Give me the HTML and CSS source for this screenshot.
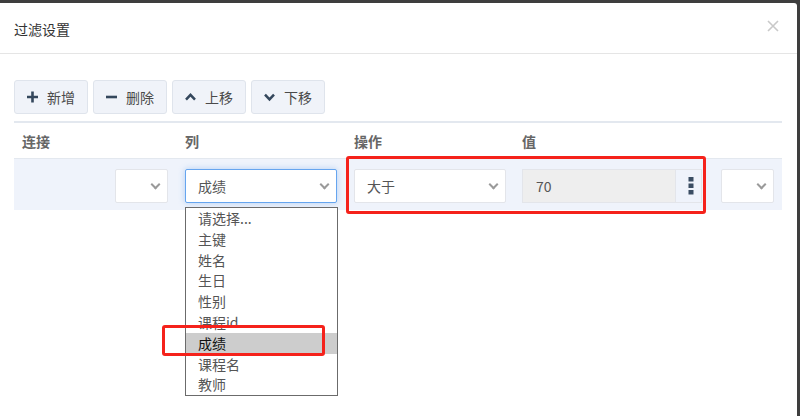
FILE: index.html
```html
<!DOCTYPE html>
<html>
<head>
<meta charset="utf-8">
<link rel="stylesheet" href="styles.css">
</head>
<body>
<div class="backdrop">
  <div class="modal">
    <div class="modal-header">
      <span class="title">过滤设置</span>
      <svg class="close" width="12" height="12" viewBox="0 0 12 12"><path d="M1 1L11 11M11 1L1 11" stroke="#c9c9c9" stroke-width="1.6"/></svg>
    </div>
    <div class="modal-body">
      <div class="toolbar">
        <button class="btn"><svg width="11" height="12" viewBox="0 0 11 12"><path d="M5.5 0.5V11.5M0 6H11" stroke="#34475c" stroke-width="2.6"/></svg><span>新增</span></button>
        <button class="btn"><svg width="11" height="12" viewBox="0 0 11 12"><path d="M0 6H11" stroke="#34475c" stroke-width="2.6"/></svg><span>删除</span></button>
        <button class="btn"><svg width="11" height="12" viewBox="0 0 11 12"><path d="M1 8.6L5.5 3.8L10 8.6" fill="none" stroke="#34475c" stroke-width="2.5"/></svg><span>上移</span></button>
        <button class="btn"><svg width="11" height="12" viewBox="0 0 11 12"><path d="M1 3.6L5.5 8.4L10 3.6" fill="none" stroke="#34475c" stroke-width="2.5"/></svg><span>下移</span></button>
      </div>
      <div class="grid">
        <div class="th">连接</div>
        <div class="th">列</div>
        <div class="th">操作</div>
        <div class="th">值</div>
        <div class="th"></div>
        <div class="td td-right"><div class="select small"><span></span><i class="chev"></i></div></div>
        <div class="td dd-host">
          <div class="select focus"><span>成绩</span><i class="chev"></i></div>
          <ul class="dropdown">
            <li>请选择...</li>
            <li>主键</li>
            <li>姓名</li>
            <li>生日</li>
            <li>性别</li>
            <li>课程id</li>
            <li class="sel">成绩</li>
            <li>课程名</li>
            <li>教师</li>
          </ul>
        </div>
        <div class="td"><div class="select"><span>大于</span><i class="chev"></i></div></div>
        <div class="td">
          <div class="input-group">
            <div class="input">70</div>
            <div class="addon"><svg width="6" height="18" viewBox="0 0 6 18"><rect x="0.5" y="0" width="5" height="4.5" fill="#3a4d63"/><rect x="0.5" y="6.5" width="5" height="4.5" fill="#3a4d63"/><rect x="0.5" y="13" width="5" height="4.5" fill="#3a4d63"/></svg></div>
          </div>
        </div>
        <div class="td"><div class="select small"><span></span><i class="chev"></i></div></div>
      </div>
    </div>
  </div>
  <div class="mark mark-a"></div>
  <div class="mark mark-b"></div>
</div>
</body>
</html>
```
FILE: styles.css
```css
html, body {
  margin: 0;
  padding: 0;
  width: 800px;
  height: 416px;
  overflow: hidden;
  font-family: "Noto Sans CJK SC", "Microsoft YaHei", sans-serif;
  background: #3e3e3e;
}
.backdrop {
  position: relative;
  width: 800px;
  height: 416px;
  padding-top: 3px;
  box-sizing: border-box;
}
.modal {
  width: 797px;
  height: 413px;
  background: #fff;
  border-top-right-radius: 3px;
}
.modal-header {
  height: 51px;
  border-bottom: 1px solid #e5e5e5;
  display: flex;
  align-items: center;
  justify-content: space-between;
  padding: 0 18px 0 14px;
  box-sizing: border-box;
}
.title {
  font-size: 14px;
  color: #333;
  margin-top: 2px;
}
.close {
  margin-top: -4px;
}
.modal-body {
  padding: 26px 15px 0 14px;
}
.toolbar {
  display: flex;
  gap: 5px;
  margin-bottom: 7px;
}
.btn {
  height: 34px;
  box-sizing: border-box;
  padding: 0 12px 0 12px;
  background: #f0f3f9;
  border: 1px solid #dfe4ec;
  border-radius: 3px;
  display: flex;
  align-items: center;
  gap: 9px;
  font-family: inherit;
  font-size: 14px;
  color: #4a4a4a;
}
.grid {
  display: grid;
  grid-template-columns: 163px 169px 168px 199px 69px;
  border-top: 2px solid #e3e8ef;
  width: 768px;
}
.th {
  height: 36px;
  box-sizing: border-box;
  padding: 8px 8px 0;
  font-size: 14px;
  font-weight: bold;
  color: #666;
  border-bottom: 1px solid #e3e8ef;
}
.td {
  background: #eff3fb;
  height: 51px;
  box-sizing: border-box;
  padding: 10px 8px 0;
}
.td-right {
  display: flex;
  justify-content: flex-end;
  padding-right: 9px;
}
.select {
  height: 34px;
  box-sizing: border-box;
  width: 152px;
  background: #fff;
  border: 1px solid #e3e5ea;
  border-radius: 2px;
  display: flex;
  align-items: center;
  justify-content: space-between;
  padding: 0 8px 0 12px;
  font-size: 14px;
  color: #555;
}
.select.small {
  width: 53px;
}
.select.focus {
  border-color: #66a5ef;
  box-shadow: 0 0 6px rgba(102, 165, 239, 0.45);
}
.chev {
  width: 5px;
  height: 5px;
  border-right: 2px solid #9a9a9a;
  border-bottom: 2px solid #9a9a9a;
  transform: rotate(45deg);
  margin-top: -4px;
}
.dd-host {
  position: relative;
}
.dropdown {
  position: absolute;
  left: 8px;
  top: 48px;
  width: 153px;
  margin: 0;
  padding: 0;
  list-style: none;
  background: #fff;
  border: 1px solid #6b6b6b;
  box-sizing: border-box;
  z-index: 2;
}
.dropdown li {
  height: 20.8px;
  line-height: 20.8px;
  padding-left: 12px;
  font-size: 14px;
  color: #555;
}
.dropdown li.sel {
  background: #cdcdcd;
  color: #111;
}
.input-group {
  display: flex;
  width: 180px;
  height: 34px;
}
.input {
  flex: 1;
  background: #eeeeee;
  border: 1px solid #e3e5ea;
  border-right: none;
  box-sizing: border-box;
  padding-left: 13px;
  font-size: 14px;
  color: #555;
  display: flex;
  align-items: center;
}
.addon {
  width: 27px;
  box-sizing: border-box;
  border: 1px solid #e3e5ea;
  background: #eff3fb;
  display: flex;
  align-items: center;
  justify-content: center;
  padding-left: 4px;
}
.mark {
  position: absolute;
  border: 3px solid #f5221b;
  border-radius: 3px;
  z-index: 3;
}
.mark-a {
  left: 346px;
  top: 156px;
  width: 354px;
  height: 52px;
}
.mark-b {
  left: 162px;
  top: 325px;
  width: 157px;
  height: 25px;
}
```
